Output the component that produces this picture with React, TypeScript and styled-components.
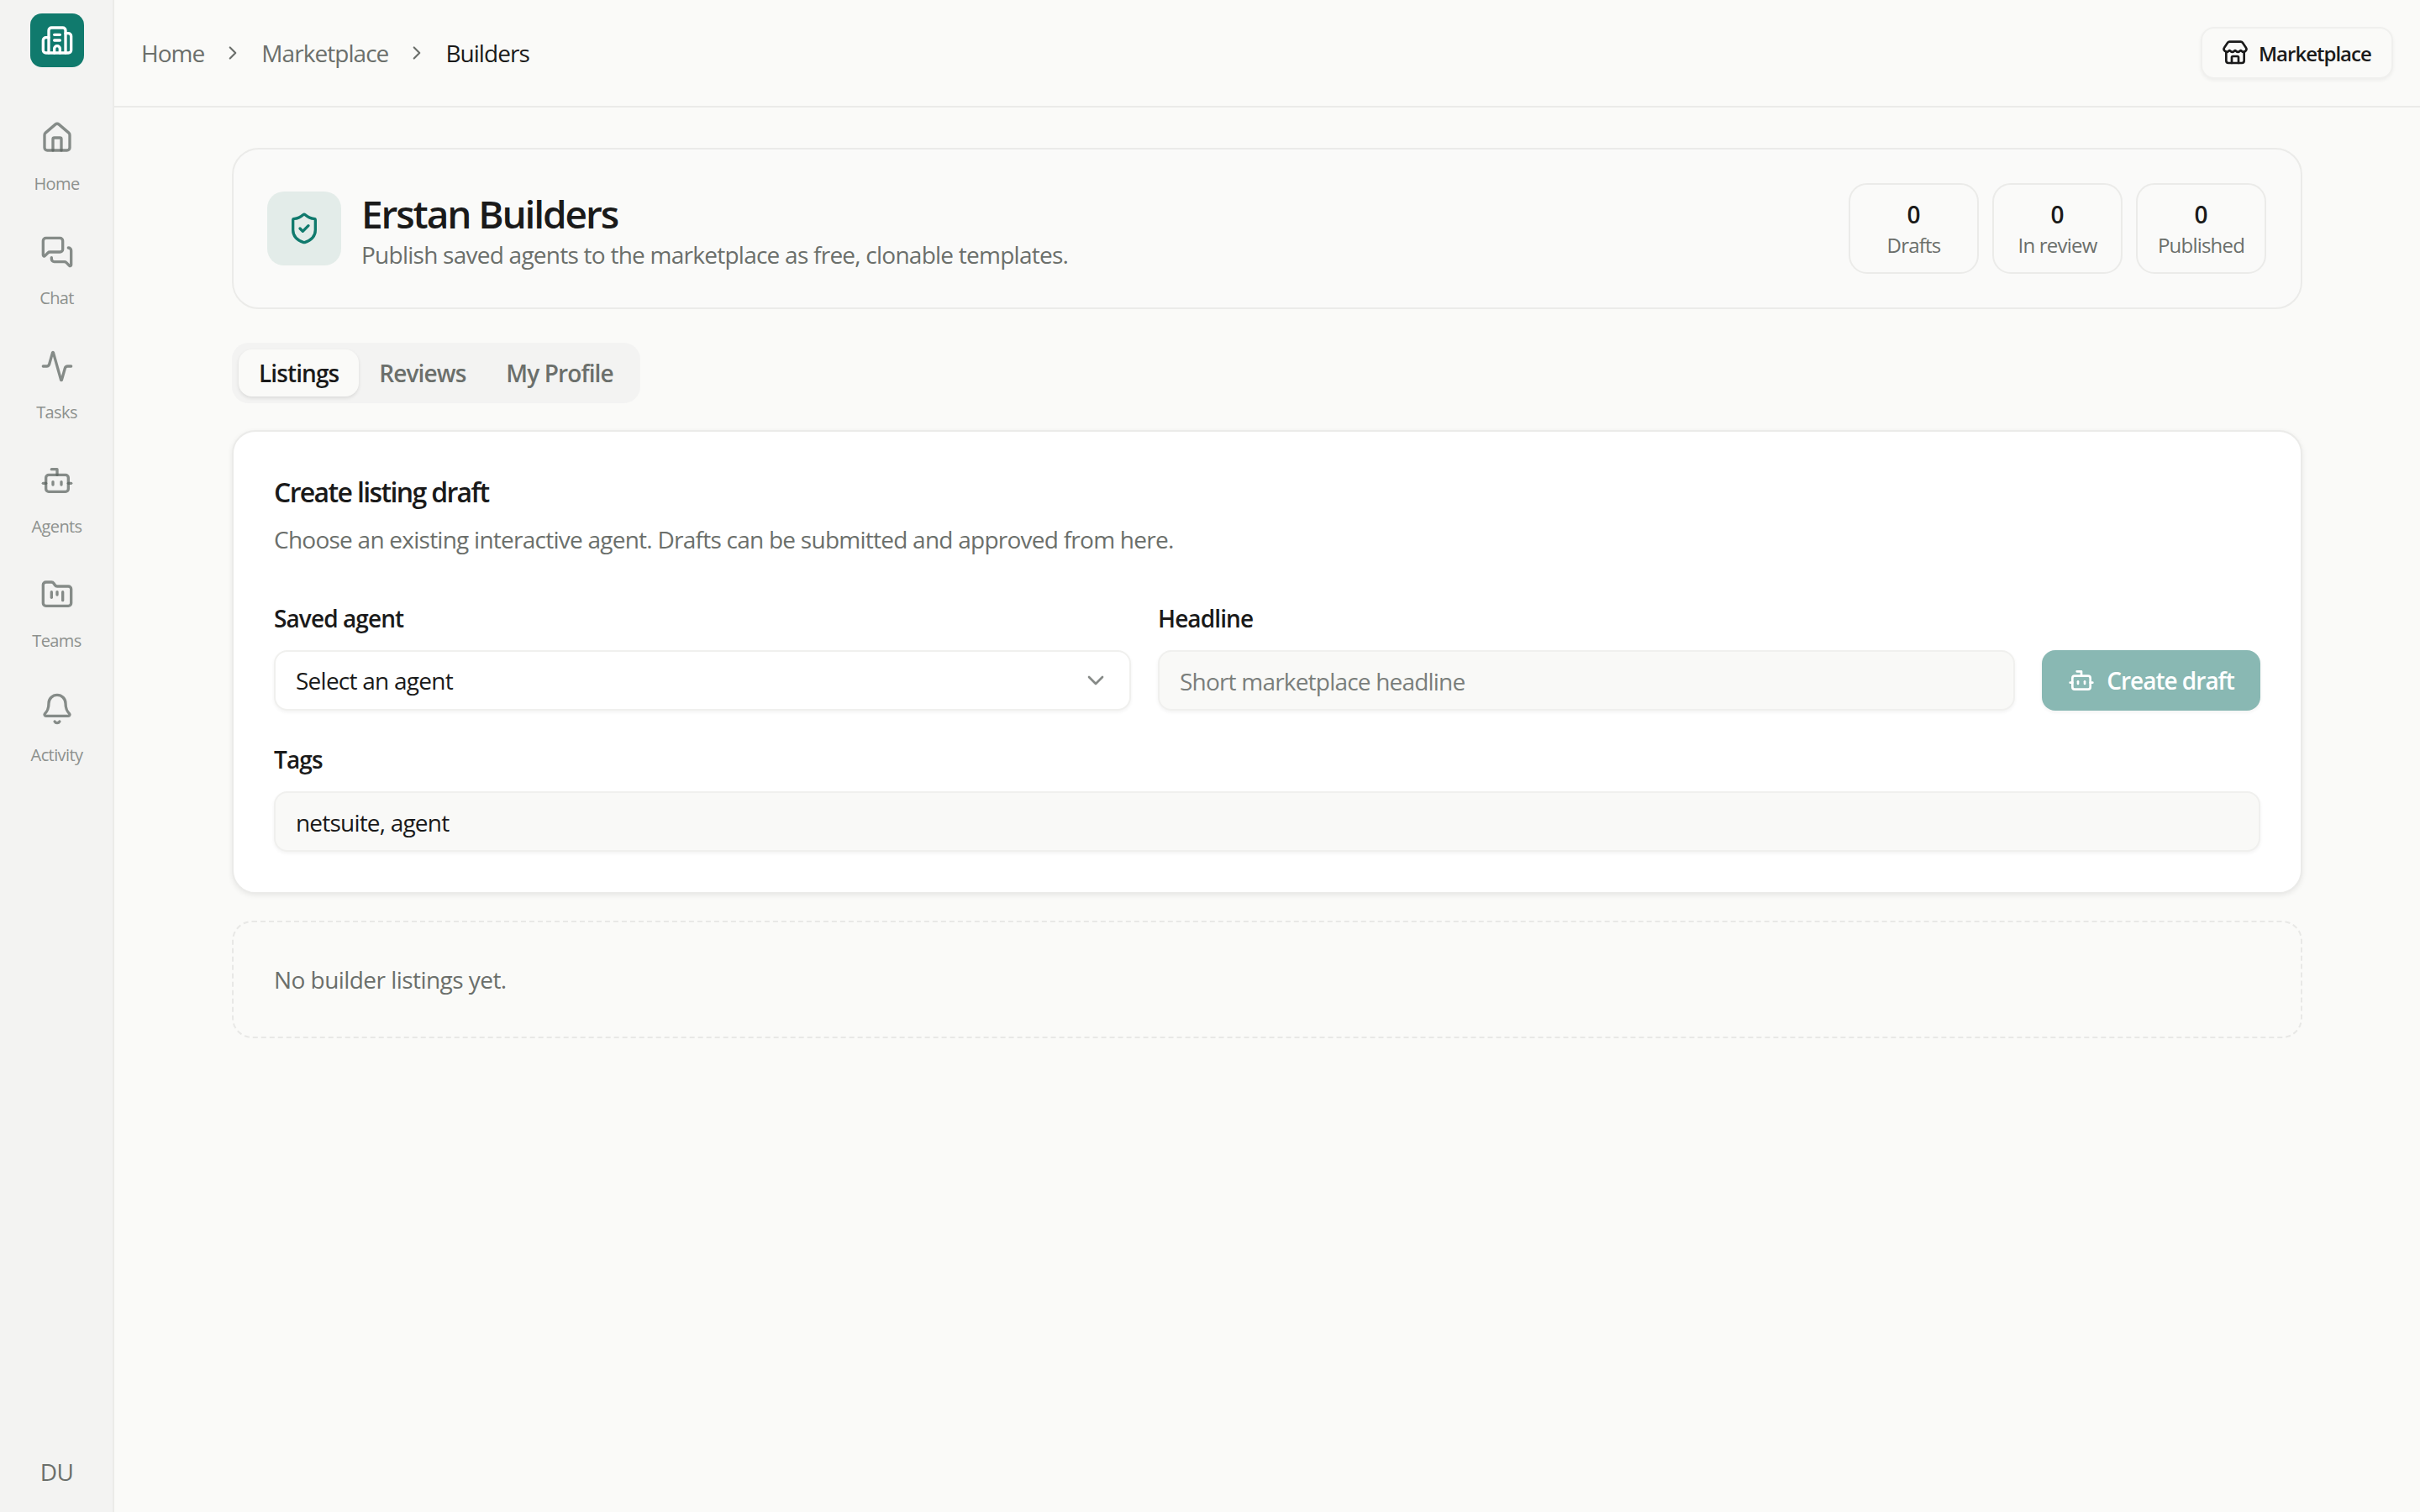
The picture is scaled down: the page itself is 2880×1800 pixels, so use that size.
import React from "react";
import styled, { createGlobalStyle } from "styled-components";
import { Activity, Bell, Bot, Building2, ChevronDown, ChevronRight, FolderKanban, House, MessagesSquare, ShieldCheck, Store } from "lucide-react";

const FONT = `"Open Sans", "Noto Sans", "Liberation Sans", sans-serif`;

const Global = createGlobalStyle`
  * { box-sizing: border-box; }
  html, body { margin: 0; padding: 0; background: #fafaf8; }
  body { font-family: ${FONT}; color: #1a1a1a; }
`;

const Shell = styled.div`display: flex; width: 2880px; height: 1800px; overflow: hidden; background: #fafaf8;`;

const Sidebar = styled.aside`
  width: 136px; flex: none; display: flex; flex-direction: column; align-items: center;
  background: #f3f3f2; box-shadow: inset -2px 0 0 #ebebe9; padding: 16px 0 30px;
`;
const Logo = styled.div`
  width: 64px; height: 64px; border-radius: 14px; background: #107a6d; color: #fff;
  display: flex; align-items: center; justify-content: center; margin-bottom: 60px;
`;
const NavList = styled.nav`display: flex; flex-direction: column; flex: 1;`;
const NavItem = styled.a`
  width: 134px; height: 136px; display: flex; flex-direction: column; align-items: center; gap: 21px;
  padding-top: 4px; color: rgba(90, 98, 94, 0.72);
  svg { flex: none; }
`;
const NavLabel = styled.span`font-size: 20px; line-height: 28px; color: #8d918e; letter-spacing: -0.6px; margin-right: 1px;`;
const Avatar = styled.div`font-size: 28px; line-height: 36px; color: #6b6f6b; letter-spacing: -0.7px; margin-right: 1px;`;

const Main = styled.main`flex: 1; min-width: 0; display: flex; flex-direction: column;`;
const Header = styled.header`
  height: 128px; flex: none; display: flex; align-items: center; justify-content: space-between;
  border-bottom: 2px solid #ebebe9; padding: 0 32px;
`;
const Crumbs = styled.ol`display: flex; align-items: center; gap: 21px; margin: 0; padding: 0; list-style: none; font-size: 28px; line-height: 40px; letter-spacing: -0.95px;`;
const Crumb = styled.li<{ $current?: boolean }>`color: ${p => (p.$current ? "#1a1a1a" : "#6b6f6b")};`;
const CrumbSep = styled.li`display: flex; color: #6b6f6b;`;
const HeaderButton = styled.button`
  height: 62px; width: 229px; display: flex; align-items: center; gap: 12px; padding: 2px 0 0 23px;
  background: #fafaf8; border: 2px solid #f0f0ee; border-radius: 16px; box-shadow: 0 2px 4px rgba(0,0,0,.05);
  font: 600 24px/32px ${FONT}; color: #1a1a1a; letter-spacing: -1px; white-space: nowrap;
  svg { flex: none; margin-top: -2px; }
`;

const Content = styled.div`width: 2464px; margin: 0 auto; padding-top: 48px; display: flex; flex-direction: column;`;
const HeroCard = styled.section`
  height: 192px; display: flex; align-items: center; justify-content: space-between; padding: 0 40px;
  border: 2px solid #ebebe9; border-radius: 32px; background: #fafaf9;
`;
const HeroLeft = styled.div`display: flex; align-items: center; gap: 24px;`;
const HeroTile = styled.div`
  width: 88px; height: 88px; border-radius: 20px; background: #e3ecE9; color: #107a6d;
  display: flex; align-items: center; justify-content: center;
`;
const HeroText = styled.div`display: flex; flex-direction: column; padding-top: 5px;`;
const HeroTitle = styled.h1`margin: 0; font-size: 46px; line-height: 56px; font-weight: 600; letter-spacing: -2.1px; color: #1a1a1a;`;
const HeroSub = styled.p`margin: 1px 0 0; font-size: 28px; line-height: 40px; color: #6b6f6b; letter-spacing: -0.75px;`;
const Stats = styled.div`display: flex; gap: 16px; margin-right: 1px;`;
const Stat = styled.div`
  width: 155px; height: 108px; padding-top: 2px; border: 2px solid #ebebe9; border-radius: 22px; display: flex; flex-direction: column;
  align-items: center; justify-content: center;
`;
const StatValue = styled.span`font-size: 28px; line-height: 38px; font-weight: 600;`;
const StatLabel = styled.span`font-size: 24px; line-height: 36px; color: #6b6f6b; letter-spacing: -0.8px;`;

const Tabs = styled.div`
  align-self: flex-start; margin-top: 40px; height: 72px; padding: 8px; display: flex; background: #f3f3f2; border-radius: 20px;
`;
const Tab = styled.button<{ $active?: boolean }>`
  height: 56px; padding: 0 24px; border: 0; border-radius: 16px; font: 600 28px/40px ${FONT}; letter-spacing: -0.9px;
  background: ${p => (p.$active ? "#fafaf8" : "transparent")};
  color: ${p => (p.$active ? "#1a1a1a" : "#6b6f6b")};
  box-shadow: ${p => (p.$active ? "0 2px 4px rgba(0,0,0,.1)" : "none")};
`;

const FormCard = styled.section`
  margin-top: 32px; height: 552px; padding: 48px; background: #fff; border: 2px solid #ebebe9; border-radius: 28px;
  box-shadow: 0 2px 6px rgba(0,0,0,.08); display: flex; flex-direction: column;
`;
const FormTitle = styled.h2`margin: 0; font-size: 32px; line-height: 48px; font-weight: 600; letter-spacing: -1.65px;`;
const FormDesc = styled.p`margin: 12px 0 0; font-size: 28px; line-height: 40px; color: #6b6f6b; letter-spacing: -0.75px;`;
const TopRow = styled.div`margin-top: 54px; display: grid; grid-template-columns: 1020px 1020px 260px; column-gap: 32px; align-items: end;`;
const Field = styled.label<{ $spaced?: boolean }>`display: flex; flex-direction: column; gap: 18px; ${p => (p.$spaced ? "margin-top: 38px;" : "")}`;
const FieldLabel = styled.span`font-size: 28px; line-height: 40px; font-weight: 600; letter-spacing: -0.9px;`;
const SelectBox = styled.div`
  height: 72px; border: 2px solid #f0f0ee; border-radius: 16px; background: #fff; padding: 0 24px; display: flex; align-items: center;
  justify-content: space-between; font-size: 28px; letter-spacing: -0.75px; box-shadow: 0 2px 4px rgba(0,0,0,.05); color: #1a1a1a;
`;
const Chevron = styled.span`display: flex; color: #868a87;`;
const TextInput = styled.input`
  height: 72px; width: 100%; border: 2px solid #f0f0ee; border-radius: 16px; background: #f9f9f7; padding: 2px 24px 0;
  font: 400 28px ${FONT}; letter-spacing: -0.8px; color: #1a1a1a; box-shadow: 0 2px 4px rgba(0,0,0,.05); outline: none;
  &::placeholder { color: #7a7e7b; opacity: 1; }
`;
const CreateButton = styled.button`
  height: 72px; border: 0; border-radius: 16px; background: #89b8b3; color: #fff; display: flex; align-items: center;
  justify-content: center; gap: 14px; font: 600 28px/40px ${FONT}; letter-spacing: -1px; box-shadow: 0 2px 4px rgba(0,0,0,.05);
`;
const EmptyBox = styled.div`
  margin-top: 32px; height: 140px; border: 2px dashed #e8e8e6; border-radius: 24px; padding: 0 48px; display: flex; align-items: center;
  font-size: 28px; color: #6b6f6b; letter-spacing: -0.55px;
`;

const nav = [
  { icon: House, label: "Home" },
  { icon: MessagesSquare, label: "Chat" },
  { icon: Activity, label: "Tasks" },
  { icon: Bot, label: "Agents" },
  { icon: FolderKanban, label: "Teams" },
  { icon: Bell, label: "Activity" },
];
const stats = ["Drafts", "In review", "Published"];

export default function App() {
  return (
    <Shell>
      <Global />
      <Sidebar>
        <Logo><Building2 size={40} strokeWidth={2} /></Logo>
        <NavList>
          {nav.map(({ icon: Icon, label }) => (
            <NavItem key={label}><Icon size={40} strokeWidth={2} /><NavLabel>{label}</NavLabel></NavItem>
          ))}
        </NavList>
        <Avatar>DU</Avatar>
      </Sidebar>
      <Main>
        <Header>
          <Crumbs>
            <Crumb>Home</Crumb>
            <CrumbSep><ChevronRight size={26} strokeWidth={2} /></CrumbSep>
            <Crumb>Marketplace</Crumb>
            <CrumbSep><ChevronRight size={26} strokeWidth={2} /></CrumbSep>
            <Crumb $current>Builders</Crumb>
          </Crumbs>
          <HeaderButton><Store size={32} strokeWidth={2} />Marketplace</HeaderButton>
        </Header>
        <Content>
          <HeroCard>
            <HeroLeft>
              <HeroTile><ShieldCheck size={40} strokeWidth={2} /></HeroTile>
              <HeroText>
                <HeroTitle>Erstan Builders</HeroTitle>
                <HeroSub>Publish saved agents to the marketplace as free, clonable templates.</HeroSub>
              </HeroText>
            </HeroLeft>
            <Stats>
              {stats.map(s => (
                <Stat key={s}><StatValue>0</StatValue><StatLabel>{s}</StatLabel></Stat>
              ))}
            </Stats>
          </HeroCard>
          <Tabs>
            <Tab $active>Listings</Tab>
            <Tab>Reviews</Tab>
            <Tab>My Profile</Tab>
          </Tabs>
          <FormCard>
            <FormTitle>Create listing draft</FormTitle>
            <FormDesc>Choose an existing interactive agent. Drafts can be submitted and approved from here.</FormDesc>
            <TopRow>
              <Field>
                <FieldLabel>Saved agent</FieldLabel>
                <SelectBox>Select an agent<Chevron><ChevronDown size={32} strokeWidth={2} /></Chevron></SelectBox>
              </Field>
              <Field>
                <FieldLabel>Headline</FieldLabel>
                <TextInput placeholder="Short marketplace headline" readOnly />
              </Field>
              <CreateButton><Bot size={32} strokeWidth={2} />Create draft</CreateButton>
            </TopRow>
            <Field $spaced>
              <FieldLabel>Tags</FieldLabel>
              <TextInput value="netsuite, agent" readOnly />
            </Field>
          </FormCard>
          <EmptyBox>No builder listings yet.</EmptyBox>
        </Content>
      </Main>
    </Shell>
  );
}
